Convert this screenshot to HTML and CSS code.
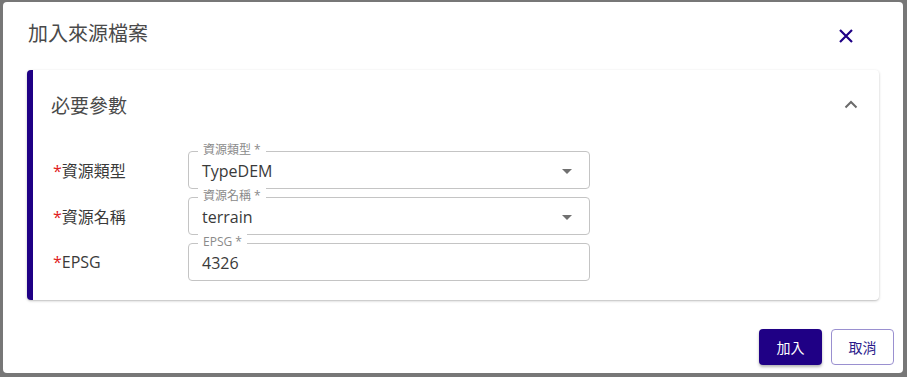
FILE: index.html
```html
<!DOCTYPE html>
<html lang="zh-Hant">
<head>
<meta charset="utf-8">
<title>加入來源檔案</title>
<link rel="stylesheet" href="styles.css">
</head>
<body>
<div class="dialog">
  <div class="dialog-header">
    <h1 class="dialog-title">加入來源檔案</h1>
    <button class="close-btn" aria-label="close">
      <svg width="14" height="14" viewBox="0 0 14 14"><path d="M1 1 L13 13 M13 1 L1 13" stroke="#1f0085" stroke-width="2.2" fill="none"/></svg>
    </button>
  </div>
  <div class="card">
    <div class="card-header">
      <span class="card-title">必要參數</span>
      <svg class="chevron" width="14" height="9" viewBox="0 0 14 9"><path d="M1.5 7.5 L7 2 L12.5 7.5" stroke="#6b6b6b" stroke-width="2" fill="none"/></svg>
    </div>
    <div class="rows">
      <div class="row">
        <div class="row-label"><span class="req">*</span>資源類型</div>
        <div class="field">
          <span class="float-label">資源類型 *</span>
          <span class="field-value">TypeDEM</span>
          <span class="caret"></span>
        </div>
      </div>
      <div class="row">
        <div class="row-label"><span class="req">*</span>資源名稱</div>
        <div class="field">
          <span class="float-label">資源名稱 *</span>
          <span class="field-value">terrain</span>
          <span class="caret"></span>
        </div>
      </div>
      <div class="row">
        <div class="row-label"><span class="req">*</span>EPSG</div>
        <div class="field">
          <span class="float-label">EPSG *</span>
          <span class="field-value">4326</span>
        </div>
      </div>
    </div>
  </div>
  <div class="footer">
    <button class="btn btn-primary">加入</button>
    <button class="btn btn-outline">取消</button>
  </div>
</div>
</body>
</html>
```
FILE: styles.css
```css
* { box-sizing: border-box; }
html, body { margin: 0; padding: 0; }
body {
  width: 907px;
  height: 377px;
  background: #777777;
  font-family: "Open Sans", "Noto Sans CJK TC", sans-serif;
  color: #333;
  overflow: hidden;
  padding: 2px 0 0 3px;
}
.dialog {
  width: 900px;
  height: 371px;
  background: #fff;
  border-radius: 4px;
  display: flex;
  flex-direction: column;
}
.dialog-header {
  height: 68px;
  display: flex;
  align-items: flex-start;
  justify-content: space-between;
  padding: 16px 50px 0 25px;
}
.dialog-title {
  margin: 0;
  font-family: "Noto Sans CJK TC", sans-serif;
  font-weight: 400;
  font-size: 20px;
  line-height: 30px;
  color: #4a4a4a;
}
.close-btn {
  border: none;
  background: none;
  padding: 0;
  margin-top: 11px;
  width: 14px;
  height: 14px;
  display: flex;
}
.card {
  margin: 0 24px;
  height: 230px;
  border-left: 6px solid #1f0085;
  border-radius: 4px;
  background: #fff;
  box-shadow: 0 1px 3px rgba(0,0,0,0.2), 0 1px 1px rgba(0,0,0,0.08);
}
.card-header {
  height: 68px;
  display: flex;
  align-items: center;
  justify-content: space-between;
  padding: 0 21px 0 18px;
}
.card-title {
  font-family: "Noto Sans CJK TC", sans-serif;
  font-size: 19px;
  color: #4a4a4a;
}
.chevron { margin-top: 1px; }
.rows {
  padding-top: 13px;
  display: flex;
  flex-direction: column;
  gap: 8px;
}
.row {
  display: flex;
  align-items: center;
  padding-left: 20px;
}
.row-label {
  width: 135px;
  font-size: 16px;
  color: #3a3a3a;
}
.req { color: #e02020; }
.field {
  position: relative;
  width: 402px;
  height: 38px;
  border: 1px solid #c4c4c4;
  border-radius: 4px;
  display: flex;
  align-items: center;
  padding: 0 13px;
}
.float-label {
  position: absolute;
  left: 9px;
  top: -10px;
  padding: 0 5px;
  background: #fff;
  font-size: 12px;
  line-height: 15px;
  color: #8a8a8a;
}
.field-value {
  flex: 1;
  font-size: 16px;
  color: #3a3a3a;
  margin-top: 2px;
}
.caret {
  width: 0;
  height: 0;
  border-left: 5px solid transparent;
  border-right: 5px solid transparent;
  border-top: 5px solid #707070;
  margin-right: 4px;
  margin-top: 2px;
}
.footer {
  margin-top: auto;
  display: flex;
  justify-content: flex-end;
  gap: 9px;
  padding: 0 9px 8px 0;
}
.btn {
  width: 63px;
  height: 36px;
  border-radius: 4px;
  font-family: "Noto Sans CJK TC", sans-serif;
  font-size: 14px;
  cursor: pointer;
}
.btn-primary {
  background: #1f0085;
  color: #fff;
  border: none;
  box-shadow: 0 2px 3px rgba(0,0,0,0.3);
}
.btn-outline {
  background: #fff;
  color: #2a1a8a;
  border: 1px solid #9a90d0;
}
```
